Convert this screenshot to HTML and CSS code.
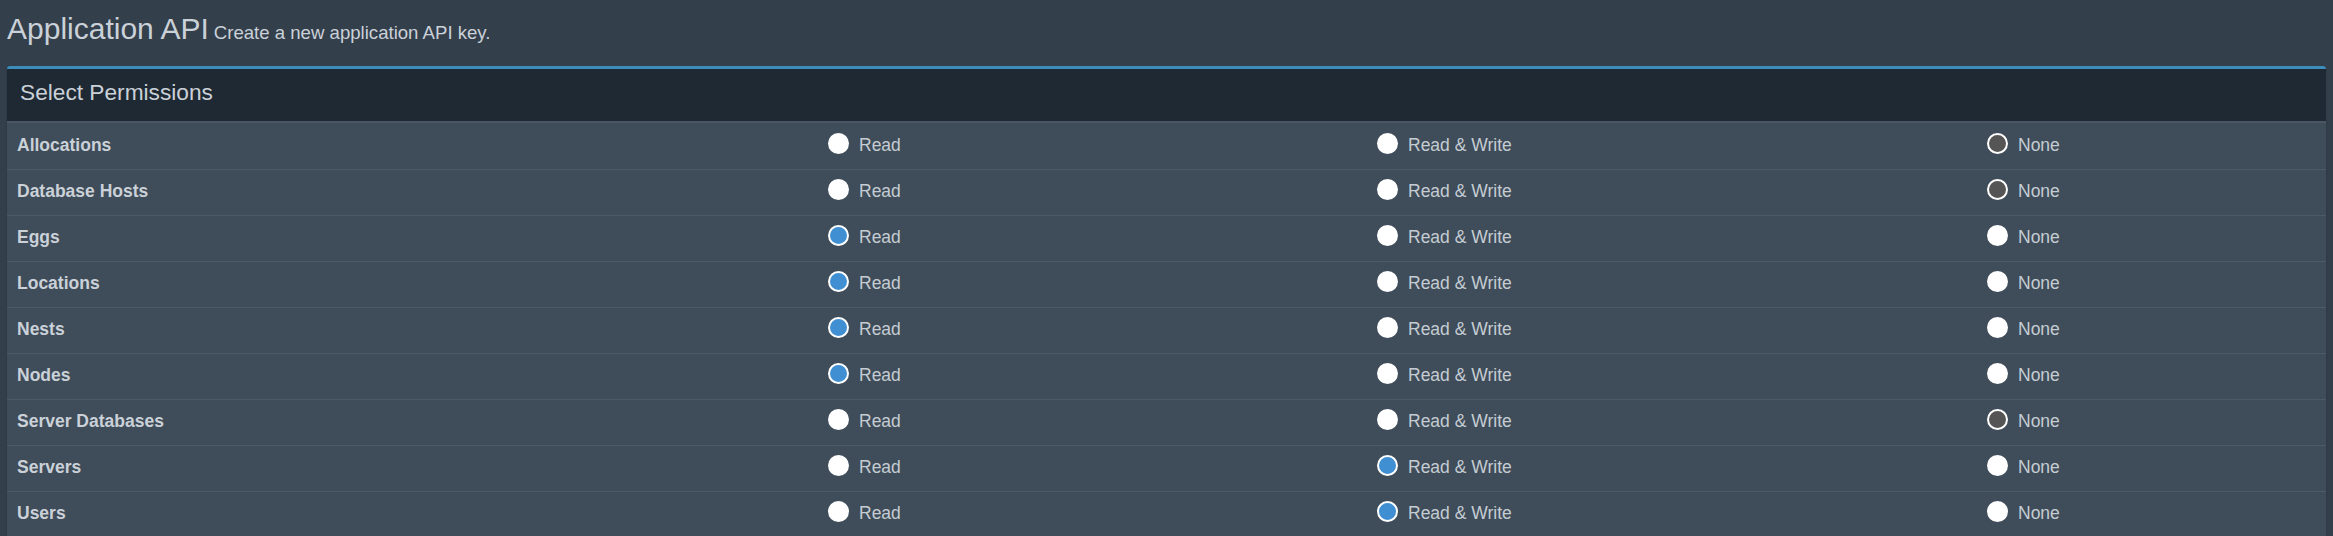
FILE: index.html
```html
<!DOCTYPE html>
<html lang="en">
<head>
<meta charset="utf-8">
<title>Application API</title>
<link rel="stylesheet" href="styles.css">
</head>
<body>
<section class="content-header">
  <h1>Application API<small>Create a new application API key.</small></h1>
</section>
<section class="box">
  <div class="box-header">Select Permissions</div>
  <table class="perms">
    <colgroup>
      <col class="c-name"><col class="c-read"><col class="c-rw"><col class="c-none">
    </colgroup>
    <tbody>
      <tr>
        <td class="name">Allocations</td>
        <td><label class="opt"><input type="radio" name="r_allocations" class="rd"><span>Read</span></label></td>
        <td><label class="opt"><input type="radio" name="r_allocations" class="rd"><span>Read &amp; Write</span></label></td>
        <td><label class="opt"><input type="radio" name="r_allocations" class="rd none" checked><span>None</span></label></td>
      </tr>
      <tr>
        <td class="name">Database Hosts</td>
        <td><label class="opt"><input type="radio" name="r_database_hosts" class="rd"><span>Read</span></label></td>
        <td><label class="opt"><input type="radio" name="r_database_hosts" class="rd"><span>Read &amp; Write</span></label></td>
        <td><label class="opt"><input type="radio" name="r_database_hosts" class="rd none" checked><span>None</span></label></td>
      </tr>
      <tr>
        <td class="name">Eggs</td>
        <td><label class="opt"><input type="radio" name="r_eggs" class="rd" checked><span>Read</span></label></td>
        <td><label class="opt"><input type="radio" name="r_eggs" class="rd"><span>Read &amp; Write</span></label></td>
        <td><label class="opt"><input type="radio" name="r_eggs" class="rd none"><span>None</span></label></td>
      </tr>
      <tr>
        <td class="name">Locations</td>
        <td><label class="opt"><input type="radio" name="r_locations" class="rd" checked><span>Read</span></label></td>
        <td><label class="opt"><input type="radio" name="r_locations" class="rd"><span>Read &amp; Write</span></label></td>
        <td><label class="opt"><input type="radio" name="r_locations" class="rd none"><span>None</span></label></td>
      </tr>
      <tr>
        <td class="name">Nests</td>
        <td><label class="opt"><input type="radio" name="r_nests" class="rd" checked><span>Read</span></label></td>
        <td><label class="opt"><input type="radio" name="r_nests" class="rd"><span>Read &amp; Write</span></label></td>
        <td><label class="opt"><input type="radio" name="r_nests" class="rd none"><span>None</span></label></td>
      </tr>
      <tr>
        <td class="name">Nodes</td>
        <td><label class="opt"><input type="radio" name="r_nodes" class="rd" checked><span>Read</span></label></td>
        <td><label class="opt"><input type="radio" name="r_nodes" class="rd"><span>Read &amp; Write</span></label></td>
        <td><label class="opt"><input type="radio" name="r_nodes" class="rd none"><span>None</span></label></td>
      </tr>
      <tr>
        <td class="name">Server Databases</td>
        <td><label class="opt"><input type="radio" name="r_server_databases" class="rd"><span>Read</span></label></td>
        <td><label class="opt"><input type="radio" name="r_server_databases" class="rd"><span>Read &amp; Write</span></label></td>
        <td><label class="opt"><input type="radio" name="r_server_databases" class="rd none" checked><span>None</span></label></td>
      </tr>
      <tr>
        <td class="name">Servers</td>
        <td><label class="opt"><input type="radio" name="r_servers" class="rd"><span>Read</span></label></td>
        <td><label class="opt"><input type="radio" name="r_servers" class="rd" checked><span>Read &amp; Write</span></label></td>
        <td><label class="opt"><input type="radio" name="r_servers" class="rd none"><span>None</span></label></td>
      </tr>
      <tr>
        <td class="name">Users</td>
        <td><label class="opt"><input type="radio" name="r_users" class="rd"><span>Read</span></label></td>
        <td><label class="opt"><input type="radio" name="r_users" class="rd" checked><span>Read &amp; Write</span></label></td>
        <td><label class="opt"><input type="radio" name="r_users" class="rd none"><span>None</span></label></td>
      </tr>
    </tbody>
  </table>
</section>
</body>
</html>
```

FILE: styles.css
```css
html, body {
  margin: 0;
  padding: 0;
}
body {
  background: #343f4c;
  font-family: "Liberation Sans", Arial, Helvetica, sans-serif;
  color: #cad1d8;
  overflow: hidden;
  height: 536px;
}
.content-header {
  padding: 12px 7px 0 7px;
}
.content-header h1 {
  margin: 0;
  font-size: 30px;
  line-height: 33px;
  font-weight: 400;
  color: #cad1d8;
}
.content-header h1 small {
  font-size: 18.6px;
  line-height: 1;
  padding-left: 5px;
  color: #cad1d8;
}
.box {
  margin: 21px 7px 0 7px;
  border-top: 3px solid #3c8dbc;
  border-radius: 3px;
  background: #3f4c59;
  box-shadow: 0 1px 2px rgba(0, 0, 0, 0.2);
  overflow: hidden;
}
.box-header {
  box-sizing: border-box;
  height: 54px;
  display: flex;
  align-items: center;
  padding: 0 13px 6px 13px;
  background: #1f2933;
  border-bottom: 2px solid #4a5663;
  font-size: 22.7px;
  color: #cad1d8;
}
.perms {
  width: 100%;
  border-collapse: collapse;
  table-layout: fixed;
}
.c-name { width: 811px; }
.c-read { width: 549px; }
.c-rw { width: 610px; }
.perms tr {
  border-bottom: 1px solid #4c5a67;
}
.perms td {
  height: 46px;
  padding: 0 10px 1px 10px;
  vertical-align: middle;
  box-sizing: border-box;
  font-size: 17.5px;
}
.perms td.name {
  font-weight: 700;
  color: #cad1d8;
}
.opt {
  display: flex;
  align-items: center;
  gap: 10px;
  color: #c5ccd3;
}
.rd {
  appearance: none;
  -webkit-appearance: none;
  box-sizing: border-box;
  width: 21px;
  height: 21px;
  margin: 0 0 4px 0;
  border-radius: 50%;
  background: #ffffff;
  border: 0;
  flex: none;
}
.rd:checked {
  background: #3f8fd2;
  border: 2px solid #ffffff;
}
.rd.none:checked {
  background: #555555;
  border: 2.5px solid #ffffff;
}
```
